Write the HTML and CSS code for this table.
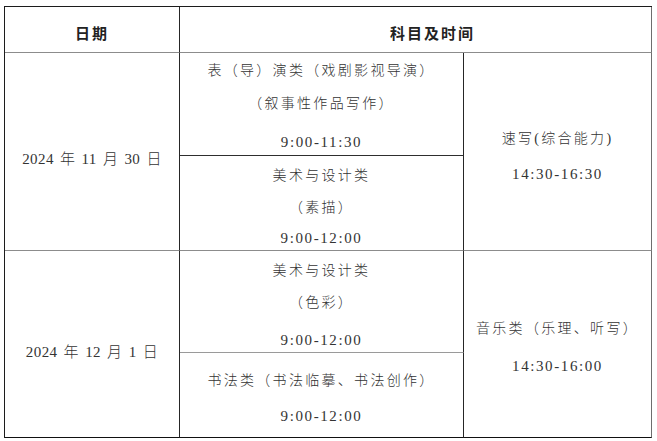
FILE: index.html
```html
<!DOCTYPE html>
<html lang="zh-CN">
<head>
<meta charset="utf-8">
<title>考试时间安排</title>
<link rel="stylesheet" href="styles.css">
</head>
<body>
<div class="sheet">
  <div class="cell head c1">日期</div>
  <div class="cell head c23">科目及时间</div>

  <div class="cell date r1">2024 年 11 月 30 日</div>
  <div class="cell sub s1a">
    <div class="ln cjk">表（导）演类（戏剧影视导演）</div>
    <div class="ln cjk g13">（叙事性作品写作）</div>
    <div class="ln num g18">9:00-11:30</div>
  </div>
  <div class="cell side r1side">
    <div class="ln cjk">速写(综合能力)</div>
    <div class="ln num g15">14:30-16:30</div>
  </div>
  <div class="cell sub s1b">
    <div class="ln cjk">美术与设计类</div>
    <div class="ln cjk g12">（素描）</div>
    <div class="ln num g10">9:00-12:00</div>
  </div>

  <div class="cell date r2">2024 年 12 月 1 日</div>
  <div class="cell sub s2a">
    <div class="ln cjk">美术与设计类</div>
    <div class="ln cjk g12">（色彩）</div>
    <div class="ln num g17">9:00-12:00</div>
  </div>
  <div class="cell side r2side">
    <div class="ln cjk">音乐类（乐理、听写）</div>
    <div class="ln num g17">14:30-16:00</div>
  </div>
  <div class="cell sub s2b">
    <div class="ln cjk">书法类（书法临摹、书法创作）</div>
    <div class="ln num g15">9:00-12:00</div>
  </div>
</div>
</body>
</html>
```
FILE: styles.css
```css
html, body {
  margin: 0;
  padding: 0;
  background: #ffffff;
}
body {
  padding: 6px 0 0 4px;
  font-family: "Liberation Serif", "Noto Sans CJK SC", serif;
  font-size: 14px;
  font-weight: 300;
  color: #333333;
}
.sheet {
  display: grid;
  grid-template-columns: 175px 284px 188px;
  grid-template-rows: 46px 103px 95px 102px 85px;
  width: max-content;
  border-top: 1px solid #1c1c1c;
  border-left: 1px solid #1c1c1c;
}
.cell {
  box-sizing: border-box;
  border-right: 1px solid #262626;
  border-bottom: 1px solid #8c8c8c;
  text-align: center;
}
.head {
  font-weight: bold;
  font-size: 15px;
  letter-spacing: 2px;
  padding-top: 17px;
  line-height: 20px;
  color: #222;
}
.c1 { grid-column: 1; grid-row: 1; }
.c23 { grid-column: 2 / 4; grid-row: 1; border-right-color: #6e6e6e; padding-left: 34px; }

.date {
  grid-column: 1;
  display: flex;
  align-items: center;
  justify-content: center;
  padding-top: 12px;
  font-size: 15px;
  letter-spacing: 0.4px;
  word-spacing: 2px;
}
.r1 { grid-row: 2 / 4; }
.r2 { grid-row: 4 / 6; border-bottom-color: #111; }

.sub { grid-column: 2; }
.s1a { grid-row: 2; padding-top: 8px; border-bottom-color: #2e2e2e; }
.s1b { grid-row: 3; padding-top: 10px; }
.s2a { grid-row: 4; padding-top: 10px; border-bottom-color: #9a9a9a; }
.s2b { grid-row: 5; padding-top: 18px; border-bottom-color: #111; }

.side { grid-column: 3; border-right-color: #6e6e6e; }
.r1side { grid-row: 2 / 4; padding-top: 76px; }
.r2side { grid-row: 4 / 6; padding-top: 68px; border-bottom-color: #111; }

.ln {
  height: 20px;
  line-height: 20px;
  white-space: nowrap;
}
.cjk { letter-spacing: 2.3px; }
.num { font-size: 15px; letter-spacing: 1.6px; }

.g10 { margin-top: 10px; }
.g12 { margin-top: 12px; }
.g13 { margin-top: 13px; }
.g15 { margin-top: 15px; }
.g17 { margin-top: 17px; }
.g18 { margin-top: 18px; }
```
